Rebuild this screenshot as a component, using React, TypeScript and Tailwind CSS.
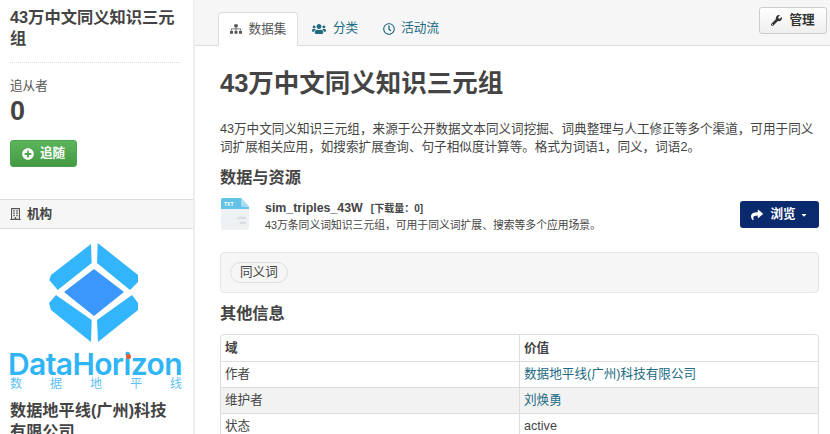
import { FaPlusCircle, FaShare, FaSitemap, FaUsers, FaRegClock, FaWrench, FaCaretDown, FaRegBuilding } from 'react-icons/fa';

const font = { fontFamily: '"Liberation Sans", "Noto Sans CJK SC", sans-serif' };

function Logo() {
  return (
    <svg viewBox="0 0 90 100" className="w-[90px] h-[100px] shrink-0 mr-[6px]">
      <path d="M42 1 L42.7 20 L8.7 47 L0.3 37 L2 32 Z" fill="#33b5fb" />
      <path d="M48.7 0 L89 32 L89 39 L81 47 L48 20 Z" fill="#33b5fb" />
      <path d="M45 26 L75 49 L45 73 L15 49 Z" fill="#3b97fb" />
      <path d="M7 52 L42.7 77 L42 99 L2 67 L0 60 Z" fill="#33b5fb" />
      <path d="M83 52 L48 77 L49 99 L89 67 L89 60 Z" fill="#33b5fb" />
    </svg>
  );
}

function FileIcon() {
  return (
    <svg viewBox="0 0 30 32" className="w-[30px] h-[32px] shrink-0">
      <path d="M1 2 Q1 0 3 0 L21 0 L29 9 L29 30 Q29 32 27 32 L3 32 Q1 32 1 30 Z" fill="#eef1f3" />
      <path d="M1 2 Q1 0 3 0 L21 0 L29 9 L29 11 L1 11 Z" fill="#63c3e6" />
      <path d="M21 0 L29 9 L23 9 Q21 9 21 7 Z" fill="#a8dcf0" />
      <text x="4" y="7.5" fontSize="5" fontWeight="700" fill="#ffffff">TXT</text>
      <text x="26" y="21" fontSize="4" textAnchor="end" fill="#b8bec4">plain</text>
      <text x="26" y="26" fontSize="4" textAnchor="end" fill="#b8bec4">text</text>
    </svg>
  );
}

export default function App() {
  const rows = [
    { k: '域', v: '价值' },
    { k: '作者', v: '数据地平线(广州)科技有限公司', link: true },
    { k: '维护者', v: '刘焕勇', link: true, alt: true },
    { k: '状态', v: 'active' },
  ];

  return (
    <div className="flex h-[434px] w-[830px] overflow-hidden bg-white text-[#444444]" style={font}>
      <aside className="w-[195px] shrink-0 border-r-2 border-[#eeeeee] flex flex-col">
        <div className="px-[10px] pt-[7px] shrink-0">
          <h1 className="text-[16.3px] leading-[21px] font-bold w-[176px]">43万中文同义知识三元组</h1>
          <div className="mt-[13px] mr-[2px] border-t border-dotted border-[#dddddd]" />
          <div className="mt-[13px] text-[12.6px] leading-[20px] text-[#555555]">追从者</div>
          <div className="text-[27px] leading-[30px] font-bold">0</div>
          <button className="mt-[14px] flex items-center h-[27px] w-[67px] rounded-[3px] border border-[#4ea24e] bg-gradient-to-b from-[#5cb45c] to-[#439a43] text-white text-[12.6px] font-bold pl-[11px] gap-[6px]">
            <FaPlusCircle className="w-[12px] h-[12px]" />
            追随
          </button>
        </div>
        <div className="mt-[32px] h-[30px] shrink-0 flex items-center gap-[6px] px-[10px] bg-[#f6f6f6] border-y border-[#dddddd] text-[12.6px] font-bold">
          <FaRegBuilding className="w-[11px] h-[12px] text-[#555555]" />
          机构
        </div>
        <div className="flex flex-col items-center pt-[14px] shrink-0">
          <Logo />
          <div className="relative mt-[9px] mr-[3px] text-[#2fb4f6] text-[30px] leading-[24px] tracking-[-0.6px] font-semibold" style={{ fontFamily: 'Inter, sans-serif' }}>
            DataHorizon
            <span className="absolute left-[118px] top-[2px] w-[5px] h-[5px] rounded-full bg-[#f0562a]" />
          </div>
          <div className="mt-[1px] mr-[1px] flex justify-between w-[172px] text-[12px] leading-[14px] text-[#5cc0f2]">
            <span>数</span><span>据</span><span>地</span><span>平</span><span>线</span>
          </div>
        </div>
        <div className="px-[10px] mt-[9px] text-[16.2px] leading-[21px] font-bold w-[178px] shrink-0">数据地平线(广州)科技有限公司</div>
      </aside>

      <main className="flex-1 min-w-0">
        <div className="h-[46px] bg-[#f6f6f6] border-b border-[#dddddd] flex items-end pl-[23px] relative">
          <div className="flex items-center gap-[7px] h-[34px] w-[80px] mb-[-1px] justify-center bg-white border border-[#dddddd] border-b-white rounded-t-[4px] text-[12.6px] text-[#555555]">
            <FaSitemap className="w-[12px] h-[12px]" />
            数据集
          </div>
          <div className="flex items-center gap-[7px] h-[33px] ml-[14px] text-[12.6px] text-[#206b82]">
            <FaUsers className="w-[14px] h-[14px]" />
            分类
          </div>
          <div className="flex items-center gap-[6px] h-[33px] ml-[25px] text-[12.6px] text-[#206b82]">
            <FaRegClock className="w-[12px] h-[12px]" />
            活动流
          </div>
          <button className="absolute right-[3px] top-[7px] h-[27px] w-[68px] flex items-center justify-center gap-[7px] rounded-[3px] border border-[#cccccc] bg-gradient-to-b from-white to-[#eeeeee] text-[12.6px] font-bold text-[#333333]">
            <FaWrench className="w-[11px] h-[11px]" />
            管理
          </button>
        </div>

        <div className="pl-[25px] pr-[11px]">
          <h2 className="mt-[20px] text-[25.5px] leading-[35px] font-bold">43万中文同义知识三元组</h2>
          <p className="mt-[19px] text-[12.6px] leading-[18px]">
            43万中文同义知识三元组，来源于公开数据文本同义词挖掘、词典整理与人工修正等多个渠道，可用于同义词扩展相关应用，如搜索扩展查询、句子相似度计算等。格式为词语1，同义，词语2。
          </p>
          <h3 className="mt-[9px] text-[16.2px] leading-[24px] font-bold">数据与资源</h3>

          <div className="mt-[9px] flex items-start h-[33px]">
            <FileIcon />
            <div className="ml-[15px] flex-1 pt-[2px]">
              <div className="flex items-baseline gap-[8px] leading-[16px]">
                <span className="text-[12.4px] font-bold">sim_triples_43W</span>
                <span className="text-[10px] font-bold">[下载量：0]</span>
              </div>
              <div className="text-[10.8px] leading-[15px] mt-[1px]">43万条同义词知识三元组，可用于同义词扩展、搜索等多个应用场景。</div>
            </div>
            <button className="mt-[3px] h-[27px] w-[79px] flex items-center justify-center gap-[7px] rounded-[3px] bg-[#0b2a6e] text-white text-[12.6px] font-bold">
              <FaShare className="w-[12px] h-[12px]" />
              浏览
              <FaCaretDown className="w-[8px] h-[8px] ml-[-3px]" />
            </button>
          </div>

          <div className="mt-[21px] h-[41px] flex items-center px-[9px] bg-[#f6f6f6] border border-[#e6e6e6] rounded-[4px]">
            <span className="h-[21px] px-[9px] flex items-center rounded-full border border-[#dddddd] text-[12.6px] text-[#444444]">同义词</span>
          </div>

          <h3 className="mt-[8px] text-[16.2px] leading-[24px] font-bold">其他信息</h3>

          <div className="mt-[9px] border border-[#dddddd] rounded-t-[4px] text-[12.6px]">
            {rows.map((r, i) => (
              <div key={r.k} className={`grid grid-cols-[299px_1fr] h-[26px] ${i > 0 ? 'border-t border-[#dddddd]' : ''} ${r.alt ? 'bg-[#f2f2f2]' : ''}`}>
                <div className={`px-[4px] flex items-center border-r border-[#dddddd] ${i === 0 ? 'font-bold' : ''}`}>{r.k}</div>
                <div className={`px-[4px] flex items-center ${r.link ? 'text-[#206b82]' : ''} ${i === 0 ? 'font-bold' : ''}`}>{r.v}</div>
              </div>
            ))}
          </div>
        </div>
      </main>
    </div>
  );
}
